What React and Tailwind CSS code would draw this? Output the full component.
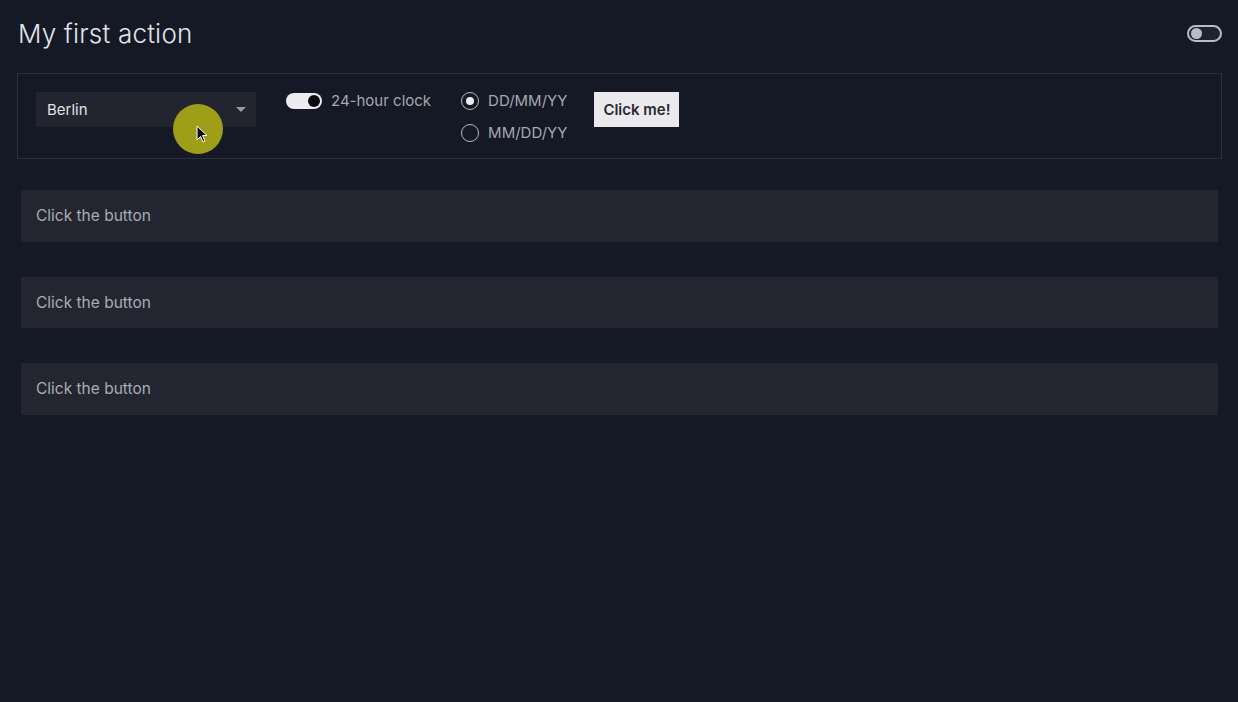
import React, { useState } from "react";

const font = { fontFamily: "Inter, 'Noto Sans', sans-serif" };

function Row({ text }) {
  return (
    <div className="h-[51.5px] ml-[21px] mr-[20px] bg-[#232631] flex items-center px-[15px] text-[15.5px] text-[#a9acb4]">
      {text}
    </div>
  );
}

export default function App() {
  const [fmt, setFmt] = useState("dmy");
  const [clock24, setClock24] = useState(true);

  return (
    <div className="relative w-[1238px] h-[702px] overflow-hidden bg-[#151926] text-[#e4e5ea]" style={font}>
      <div className="flex items-center justify-between pl-[18px] pr-[16px] h-[68px]">
        <h1 className="text-[26px] font-light text-[#e2e3e8] tracking-[0.2px] -mt-[1px]">My first action</h1>
        <div className="w-[35px] h-[17px] -mt-[2px] rounded-full border-2 border-[#b9bcc6] bg-[#1f2230] flex items-center px-[2px]">
          <div className="w-[11px] h-[11px] rounded-full bg-[#b9bcc6]" />
        </div>
      </div>

      <div className="ml-[17px] mr-[16px] mt-[5px] h-[86px] border border-[#2b2f3b] flex items-start pt-[18px] pl-[18px]">
        <div className="w-[220px] h-[35px] bg-[#22252f] flex items-center justify-between pl-[11px] pr-[10px] pt-[2px]">
          <span className="text-[15px] text-[#e0e1e6]">Berlin</span>
          <svg width="10" height="6" viewBox="0 0 10 6" className="-mt-[2px]">
            <path d="M0 0 L10 0 L5 5 Z" fill="#9a9ca4" />
          </svg>
        </div>

        <div className="flex items-center ml-[30px] h-[17px] mt-[0px]">
          <button
            onClick={() => setClock24(!clock24)}
            className="w-[36px] h-[16px] rounded-full bg-[#ececf0] flex items-center justify-end px-[2px]"
          >
            <div className="w-[12px] h-[12px] rounded-full bg-[#0c0c10]" />
          </button>
          <span className="ml-[9px] text-[15px] text-[#a4a7af] pt-[2px]">24-hour clock</span>
        </div>

        <div className="flex flex-col ml-[30px] gap-[13px] -mt-[1px]">
          {[
            ["dmy", "DD/MM/YY"],
            ["mdy", "MM/DD/YY"],
          ].map(([k, label]) => (
            <label key={k} className="flex items-center cursor-pointer" onClick={() => setFmt(k)}>
              <span className="w-[18px] h-[18px] rounded-full border border-[#b4b7bf] flex items-center justify-center">
                {fmt === k && <span className="w-[8px] h-[8px] rounded-full bg-[#ececf0]" />}
              </span>
              <span className="ml-[9px] text-[15px] text-[#a4a7af] leading-[18px] pt-[1px]">{label}</span>
            </label>
          ))}
        </div>

        <button className="ml-[27px] w-[85px] h-[35px] pt-[2px] bg-[#e9e9ee] text-[#2a2b30] text-[15px] font-semibold">
          Click me!
        </button>
      </div>

      <div className="mt-[31px] flex flex-col gap-[35px]">
        <Row text="Click the button" />
        <Row text="Click the button" />
        <Row text="Click the button" />
      </div>

      <div className="absolute left-[173px] top-[104px] w-[50px] h-[50px] rounded-full bg-[#a6a516] opacity-95" />
      <svg className="absolute left-[196px] top-[125px]" width="12" height="19" viewBox="0 0 12 19">
        <path d="M1 1 L1 15 L4.5 11.5 L7 17 L9 16 L6.5 10.5 L11 10.5 Z" fill="#111" stroke="#fff" strokeWidth="1" />
      </svg>
    </div>
  );
}
